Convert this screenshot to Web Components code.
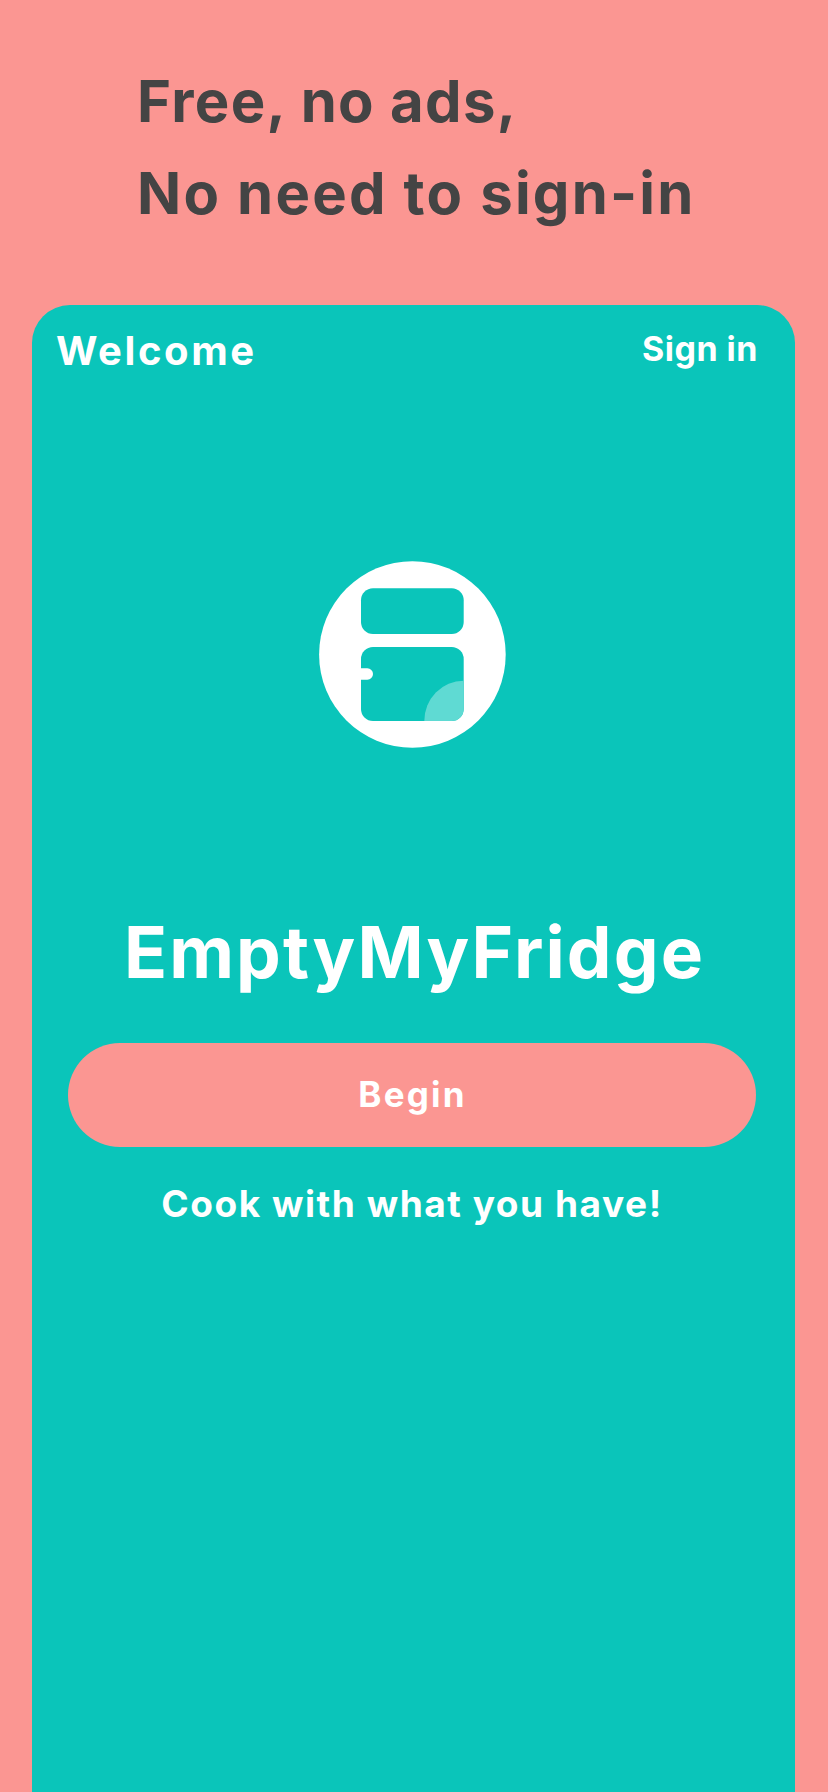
<!DOCTYPE html>
<html lang="en">
<head>
<meta charset="utf-8">
<title>EmptyMyFridge</title>
<style>
html,body{margin:0;padding:0;height:1792px;overflow:hidden;background:#FB9692}
body{font-family:Inter,"Liberation Sans",sans-serif}
</style>
</head>
<body>
<promo-headline>
  <span style="letter-spacing:1.35px">Free, no ads,</span>
  <span style="letter-spacing:2.2px">No need to sign-in</span>
</promo-headline>
<welcome-card>
  <card-header>
    <span slot="title">Welcome</span>
    <span slot="action">Sign in</span>
  </card-header>
  <fridge-logo></fridge-logo>
  <app-title>EmptyMyFridge</app-title>
  <begin-button>Begin</begin-button>
  <app-tagline>Cook with what you have!</app-tagline>
</welcome-card>
<script>
function define(name, html){
  customElements.define(name, class extends HTMLElement{
    constructor(){
      super();
      this.attachShadow({mode:'open'}).innerHTML = html;
    }
  });
}
define('promo-headline', `<style>
:host{display:flex;flex-direction:column;padding:55px 0 0 137px;color:#444;
font:700 58px/92px Inter,"Liberation Sans",sans-serif;white-space:nowrap}
</style><slot></slot>`);
define('welcome-card', `<style>
:host{display:block;box-sizing:border-box;margin:66px 33px 0 32px;height:1487px;background:#0AC5BA;
border-radius:38px 38px 0 0;padding:21px 39px 0 36px;color:#fff;overflow:hidden}
</style><slot></slot>`);
define('card-header', `<style>
:host{display:flex;justify-content:space-between;align-items:flex-start;margin:0 -2px 0 -11px;white-space:nowrap}
.t{font:700 40px/50px Inter,"Liberation Sans",sans-serif;letter-spacing:2.6px;margin-left:-1px}
.a{font:700 34px/50px Inter,"Liberation Sans",sans-serif;letter-spacing:.5px;margin-top:-2px}
</style><div class="t"><slot name="title"></slot></div><div class="a"><slot name="action"></slot></div>`);
define('fridge-logo', `<style>
:host{display:flex;justify-content:center;margin-top:185px}
svg{display:block;width:187px;height:187px}
</style><svg viewBox="318 561 187 187" aria-hidden="true">
<circle cx="411.4" cy="654.5" r="93.3" fill="#fff"/>
<rect x="360" y="588.3" width="102.7" height="45.7" rx="12" fill="#0AC5BA"/>
<rect x="360" y="647" width="102.7" height="74" rx="12" fill="#0AC5BA"/>
<path d="M423.3 721A39.4 40.3 0 0 1 462.7 680.7V709a12 12 0 0 1-12 12Z" fill="#5FDAD3"/>
<path d="M360 668.3h6.3a5.7 5.7 0 0 1 0 11.4H360Z" fill="#fff"/>
</svg>`);
define('app-title', `<style>
:host{display:block;margin-top:159px;padding-left:5px;text-align:center;font:700 71px/90px Inter,"Liberation Sans",sans-serif;letter-spacing:2.1px;white-space:nowrap}
</style><slot></slot>`);
define('begin-button', `<style>
:host{display:flex;align-items:center;justify-content:center;box-sizing:border-box;height:104px;margin-top:46px;padding:0 0 2px 1px;
background:#FB9692;border-radius:52px;font:700 35px/50px Inter,"Liberation Sans",sans-serif;letter-spacing:2.2px}
</style><slot></slot>`);
define('app-tagline', `<style>
:host{display:block;margin-top:32px;text-align:center;font:700 37px/50px Inter,"Liberation Sans",sans-serif;letter-spacing:1.55px;white-space:nowrap}
</style><slot></slot>`);
</script>
</body>
</html>
